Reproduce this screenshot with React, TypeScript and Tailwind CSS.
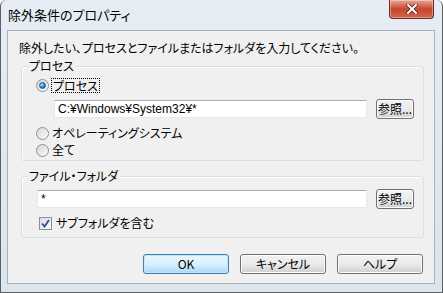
import React from "react";

const jp = "font-['Meiryo_UI','Noto_Sans_CJK_JP',sans-serif] [font-feature-settings:'palt']";

function Radio({ checked }: { checked?: boolean }) {
  return (
    <span className="flex h-[13px] w-[13px] items-center justify-center rounded-full border border-[#8e8f8f] bg-gradient-to-br from-[#d6d6d6] to-[#fbfbfb]">
      {checked && (
        <span className="h-[7px] w-[7px] rounded-full border border-[#1d5b8f] bg-[radial-gradient(circle_at_35%_35%,#b9e4ff,#1f7bc4_60%,#114f89)]" />
      )}
    </span>
  );
}

function WinButton({ label, primary, small }: { label: string; primary?: boolean; small?: boolean }) {
  return (
    <button
      className={`flex items-center justify-center rounded-[3px] border text-[12px] leading-none text-black ${
        primary
          ? "border-[#3c7fb1] bg-gradient-to-b from-[#eaf6fd] via-[#d9f0fc] to-[#a7d9f5] shadow-[inset_0_0_0_1px_#c4e6f9]"
          : "border-[#707070] bg-gradient-to-b from-[#f2f2f2] via-[#ebebeb] to-[#cfcfcf] shadow-[inset_0_0_0_1px_#fcfcfc]"
      } ${small ? "h-[20px] w-[38px] text-[11px]" : "h-[20px] w-[86px]"}`}
    >
      {label}
    </button>
  );
}

function TextBox({ value, width }: { value: string; width: string }) {
  return (
    <div
      className={`flex h-[18px] items-center border border-[#e3e9ef] border-t-[#abadb3] bg-white pl-[3px] font-['Liberation_Sans',sans-serif] text-[12px] text-black ${width}`}
    >
      {value}
    </div>
  );
}

export default function App() {
  return (
    <div className={`relative h-[293px] w-[443px] overflow-hidden rounded-t-[6px] border border-t-0 border-[#5a6068] bg-gradient-to-b from-[#e6edf4] to-[#dce4ec] ${jp}`}>
      {/* Title bar */}
      <div className="flex h-[30px] items-center pl-[7px] text-[13px] text-black">除外条件のプロパティ</div>
      <div className="absolute right-[8px] top-0 flex h-[19px] w-[45px] items-center justify-center rounded-b-[4px] border border-t-0 border-[#6e2a22] bg-gradient-to-b from-[#e8a497] via-[#c7452f] to-[#d7624a] shadow-[inset_0_0_0_1px_rgba(255,255,255,0.35)]">
        <svg width="12" height="10" viewBox="0 0 12 10">
          <path d="M2 1 L10 9 M10 1 L2 9" stroke="#4a2019" strokeWidth="3.4" strokeLinecap="square" />
          <path d="M2 1 L10 9 M10 1 L2 9" stroke="#ffffff" strokeWidth="2" strokeLinecap="square" />
        </svg>
      </div>

      {/* Client area */}
      <div className="ml-[6px] h-[254px] w-[428px] border border-[#a8b2bd] bg-[#f0f0f0] text-[12px] text-black">
        <div className="flex h-[33px] items-center pl-[11px]">除外したい、プロセスとファイルまたはフォルダを入力してください。</div>

        {/* Process group */}
        <div className="relative ml-[13px] mt-[2px] flex h-[95px] w-[403px] flex-col rounded-[3px] border border-[#d5dfe5] shadow-[inset_1px_1px_0_#fff]">
          <span className="absolute -top-[8px] left-[5px] bg-[#f0f0f0] px-[2px] leading-[14px]">プロセス</span>
          <div className="ml-[14px] mt-[10px] flex h-[16px] items-center">
            <Radio checked />
            <span className="ml-[2px] border border-dotted border-black px-[1px] leading-[13px]">プロセス</span>
          </div>
          <div className="ml-[32px] mt-[6px] flex items-center gap-[9px]">
            <TextBox value="C:¥Windows¥System32¥*" width="w-[313px]" />
            <WinButton label="参照..." small />
          </div>
          <div className="ml-[14px] mt-[6px] flex h-[16px] items-center gap-[3px]">
            <Radio />
            <span>オペレーティングシステム</span>
          </div>
          <div className="ml-[14px] mt-[1px] flex h-[16px] items-center gap-[3px]">
            <Radio />
            <span>全て</span>
          </div>
        </div>

        {/* File / folder group */}
        <div className="relative ml-[13px] mt-[15px] flex h-[62px] w-[403px] flex-col rounded-[3px] border border-[#d5dfe5] shadow-[inset_1px_1px_0_#fff]">
          <span className="absolute -top-[8px] left-[5px] bg-[#f0f0f0] px-[2px] leading-[14px]">ファイル・フォルダ</span>
          <div className="ml-[15px] mt-[12px] flex items-center gap-[9px]">
            <TextBox value="*" width="w-[330px]" />
            <WinButton label="参照..." small />
          </div>
          <div className="ml-[17px] mt-[6px] flex h-[16px] items-center gap-[4px]">
            <span className="flex h-[13px] w-[13px] items-center justify-center border border-[#8e8f8f] bg-gradient-to-br from-[#dcdcdc] to-[#fbfbfb]">
              <svg width="9" height="9" viewBox="0 0 9 9">
                <path d="M1 4.5 L3.5 7.5 L8 1" fill="none" stroke="#2a4f9a" strokeWidth="1.8" />
              </svg>
            </span>
            <span>サブフォルダを含む</span>
          </div>
        </div>

        {/* Buttons */}
        <div className="ml-[135px] mt-[16px] flex gap-[11px]">
          <WinButton label="OK" primary />
          <WinButton label="キャンセル" />
          <WinButton label="ヘルプ" />
        </div>
      </div>
    </div>
  );
}
